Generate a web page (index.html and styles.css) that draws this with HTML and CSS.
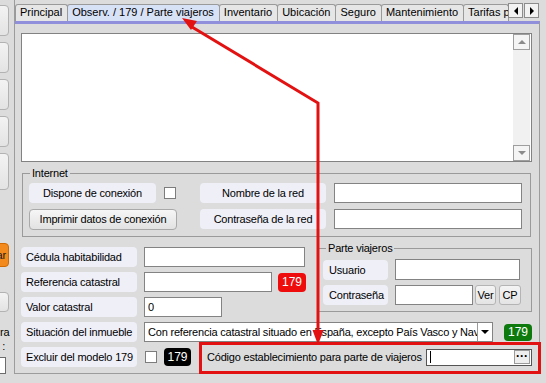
FILE: index.html
```html
<!DOCTYPE html>
<html lang="es">
<head>
<meta charset="utf-8">
<title>Observ. / 179 / Parte viajeros</title>
<link rel="stylesheet" href="styles.css">
</head>
<body>
<div class="app">
  <aside class="side">
    <div class="sbtn"></div>
    <div class="sbtn"></div>
    <div class="sbtn"></div>
    <div class="sbtn"></div>
    <div class="sbtn tall"></div>
    <div class="sbtn orange">ar</div>
    <div class="sbtn small"></div>
    <div class="stext">ra</div>
    <div class="stext colon">:</div>
    <div class="sinput"></div>
  </aside>
  <main class="main">
    <nav class="tabs">
      <span class="tab">Principal</span>
      <span class="tab active">Observ. / 179 / Parte viajeros</span>
      <span class="tab">Inventario</span>
      <span class="tab">Ubicación</span>
      <span class="tab">Seguro</span>
      <span class="tab">Mantenimiento</span>
      <span class="tab clipped">Tarifas por</span>
      <span class="tabarrow"><i class="tri-left"></i></span>
      <span class="tabarrow"><i class="tri-right"></i></span>
    </nav>
    <section class="panel">
      <div class="memo">
        <div class="memo-text"></div>
        <div class="vscroll">
          <span class="sb"><i class="tri-up"></i></span>
          <span class="track"></span>
          <span class="sb"><i class="tri-down"></i></span>
        </div>
      </div>
      <fieldset class="group internet">
        <legend>Internet</legend>
        <div class="irow">
          <div class="icell">
            <span class="lbl center w-disp">Dispone de conexión</span>
            <span class="chk chk-disp"></span>
          </div>
          <span class="lbl center w-red">Nombre de la red</span>
          <span class="inp w-redinp"></span>
        </div>
        <div class="irow">
          <div class="icell">
            <span class="btn w-print">Imprimir datos de conexión</span>
          </div>
          <span class="lbl center w-red">Contraseña de la red</span>
          <span class="inp w-redinp"></span>
        </div>
      </fieldset>
      <div class="lower">
        <div class="lower-top">
          <div class="lcol">
            <div class="frow">
              <span class="lbl lw">Cédula habitabilidad</span>
              <span class="inp fin w-ced"></span>
            </div>
            <div class="frow">
              <span class="lbl lw">Referencia catastral</span>
              <span class="inp fin w-ref"></span>
              <span class="badge red">179</span>
            </div>
            <div class="frow">
              <span class="lbl lw">Valor catastral</span>
              <span class="inp fin w-val">0</span>
            </div>
          </div>
          <fieldset class="group pv">
            <legend>Parte viajeros</legend>
            <div class="frow tall">
              <span class="lbl pw">Usuario</span>
              <span class="inp pin w-user"></span>
            </div>
            <div class="frow">
              <span class="lbl pw">Contraseña</span>
              <span class="inp pin w-pass"></span>
              <span class="sbutton ver">Ver</span>
              <span class="sbutton cp">CP</span>
            </div>
          </fieldset>
        </div>
        <div class="frow">
          <span class="lbl lw">Situación del inmueble</span>
          <span class="select fin">
            <span class="select-text">Con referencia catastral situado en España, excepto País Vasco y Navarra</span>
            <span class="select-btn"><i class="tri-down dark"></i></span>
          </span>
          <span class="badge green">179</span>
        </div>
        <div class="frow">
          <span class="lbl lw">Excluir del modelo 179</span>
          <span class="chk chk-excl"></span>
          <span class="badge black">179</span>
          <div class="codigo">
            <span class="codigo-text">Código establecimiento para parte de viajeros</span>
            <span class="inp codigo-inp"><span class="caret"></span><span class="dots">···</span></span>
          </div>
        </div>
      </div>
    </section>
  </main>
</div>
<svg class="annot" width="546" height="383" viewBox="0 0 546 383" xmlns="http://www.w3.org/2000/svg">
  <rect x="200.5" y="343.5" width="339" height="29" fill="none" stroke="#e31212" stroke-width="3"/>
  <polyline points="318,332 318,103 192,27" fill="none" stroke="#e31212" stroke-width="3" stroke-linejoin="miter"/>
  <polygon points="182,18 197,21 191,30" fill="#e31212"/>
  <polygon points="318,345 312.5,330 323.5,330" fill="#e31212"/>
</svg>
</body>
</html>
```
FILE: styles.css
```css
* { box-sizing: border-box; }

body {
  margin: 0;
  width: 546px;
  height: 383px;
  overflow: hidden;
  position: relative;
  background: #dcdcdc;
  font-family: "Liberation Sans", Arial, sans-serif;
  font-size: 11px;
  letter-spacing: -0.2px;
  color: #000;
}

.app { display: flex; height: 383px; }

/* left, clipped strip */
.side {
  width: 14px;
  flex: none;
  display: flex;
  flex-direction: column;
  align-items: flex-start;
  overflow: hidden;
  padding-top: 5px;
}
.sbtn {
  flex: none;
  width: 20px;
  height: 31px;
  margin-left: -11px;
  margin-bottom: 6px;
  border: 1px solid #b2b2b2;
  border-radius: 4px;
  background: linear-gradient(#f3f3f3, #e3e3e3);
}
.sbtn.tall { height: 37px; margin-bottom: 0; }
.sbtn.orange {
  margin-top: 53px;
  height: 24px;
  margin-bottom: 0;
  background: #f28a1e;
  border-color: #d26a00;
  text-align: right;
  padding-right: 2px;
  line-height: 22px;
  color: #1a1a1a;
}
.sbtn.small { margin-top: 25px; height: 20px; margin-bottom: 0; }
.stext { margin-top: 14px; width: 8px; text-align: right; line-height: 13px; }
.stext.colon { margin-top: 1px; width: 5px; }
.sinput {
  margin-top: 4px;
  width: 6px;
  height: 17px;
  background: #fff;
  border: 1px solid #6c6c6c;
  border-left: none;
}

/* main */
.main {
  width: 526px;
  flex: none;
  height: 374px;
  display: flex;
  flex-direction: column;
  border-left: 1px solid #9c9c9c;
}
.tabs {
  height: 21px;
  flex: none;
  display: flex;
  align-items: flex-end;
}
.tab {
  flex: none;
  height: 17px;
  padding: 0 5px 0 4px;
  margin-right: -1px;
  border: 1px solid #9a9a9a;
  border-bottom: none;
  border-radius: 3px 3px 0 0;
  background: #e6e6e6;
  line-height: 15px;
  letter-spacing: 0;
  white-space: nowrap;
}
.tab.active { background: #d8e2f7; }
.tab.clipped { flex: 1 1 0; min-width: 0; overflow: hidden; }
.tabarrow {
  flex: none;
  width: 15px;
  height: 15px;
  margin: 0 1px 3px 0;
  border: 1px solid #8c8c8c;
  background: #f2f2f2;
  display: flex;
  align-items: center;
  justify-content: center;
}
.tri-left { width: 0; height: 0; border-top: 4px solid transparent; border-bottom: 4px solid transparent; border-right: 4px solid #000; }
.tri-right { width: 0; height: 0; border-top: 4px solid transparent; border-bottom: 4px solid transparent; border-left: 4px solid #000; }
.tri-up { width: 0; height: 0; border-left: 4px solid transparent; border-right: 4px solid transparent; border-bottom: 4px solid #8a8a8a; }
.tri-down { width: 0; height: 0; border-left: 4px solid transparent; border-right: 4px solid transparent; border-top: 4px solid #8a8a8a; }
.tri-down.dark { border-top-color: #000; }

.panel {
  flex: 1;
  border-top: 3px solid #8f8fdc;
  border-right: 1px solid #9c9c9c;
  border-bottom: 1px solid #9c9c9c;
  padding: 9px 7px 0 6px;
}

/* memo */
.memo {
  height: 129px;
  display: flex;
  background: #fff;
  border: 1px solid #828282;
}
.memo-text { flex: 1; }
.vscroll {
  width: 17px;
  margin: 0 1px 0 0;
  display: flex;
  flex-direction: column;
  background: #f1f1f1;
}
.sb {
  height: 16px;
  flex: none;
  border: 1px solid #9e9e9e;
  background: #f4f4f4;
  display: flex;
  align-items: center;
  justify-content: center;
}
.track { flex: 1; }

/* groups */
.group {
  margin: 4px 1px 0;
  border: 1px solid #9a9a9a;
  min-width: 0;
}
.group legend {
  padding: 0 2px;
  line-height: 14px;
  font-size: 11px;
}
.internet { padding: 3px 8px 7px 6px; }
.internet legend { margin-left: 1px; }
.irow { display: flex; align-items: center; height: 20px; }
.irow + .irow { margin-top: 6px; }
.icell { width: 171px; flex: none; display: flex; align-items: center; }

.lbl {
  flex: none;
  height: 20px;
  line-height: 20px;
  background: #efeff8;
  border-radius: 4px;
  padding: 0 5px;
  white-space: nowrap;
}
.lbl.center { text-align: center; padding: 0; }
.w-disp { width: 127px; }
.w-red { width: 126px; }
.lw { width: 116px; }
.pw { width: 65px; padding-left: 6px; }

.chk {
  flex: none;
  width: 12px;
  height: 12px;
  background: #fff;
  border: 1px solid #7c7c7c;
}
.chk-disp { margin-left: 8px; }
.chk-excl { margin-left: 8px; }

.inp {
  flex: none;
  height: 20px;
  background: #fff;
  border: 1px solid #838383;
  line-height: 18px;
  padding-left: 3px;
}
.w-redinp { width: 188px; margin-left: 8px; }

.btn {
  flex: none;
  width: 148px;
  height: 21px;
  line-height: 19px;
  text-align: center;
  border: 1px solid #a9a9a9;
  border-radius: 4px;
  background: linear-gradient(#f6f6f6, #e2e2e2);
  white-space: nowrap;
}

/* lower part */
.lower {
  margin-top: 4px;
  display: flex;
  flex-direction: column;
  gap: 5px;
}
.lower-top { display: flex; align-items: flex-start; }
.lcol {
  width: 297px;
  flex: none;
  padding-top: 6px;
  display: flex;
  flex-direction: column;
  gap: 5px;
}
.frow { display: flex; align-items: center; height: 20px; }
.frow.tall { height: 21px; }
.fin { margin-left: 7px; }
.w-ced { width: 161px; }
.w-ref { width: 128px; }
.w-val { width: 78px; }

.badge {
  flex: none;
  color: #fff;
  border-radius: 4px;
  text-align: center;
  font-size: 12px;
  letter-spacing: 0;
}
.badge.red { background: #ee0c0c; width: 28px; height: 19px; line-height: 19px; margin-left: 6px; }
.badge.green { background: #0e7a0e; width: 28px; height: 17px; line-height: 17px; margin-left: 11px; }
.badge.black { background: #000; width: 27px; height: 18px; line-height: 18px; margin-left: 7px; }

.pv {
  margin: 0;
  width: 214px;
  flex: none;
  padding: 4px 4px 6px 4px;
}
.pv legend { margin-left: 3px; }
.pv .frow + .frow { margin-top: 5px; }
.pin { margin-left: 7px; }
.w-user { width: 125px; height: 21px; }
.w-pass { width: 78px; }
.sbutton {
  flex: none;
  height: 20px;
  line-height: 18px;
  text-align: center;
  border: 1px solid #b4b4b4;
  border-radius: 3px;
  background: linear-gradient(#f4f4f4, #e4e4e4);
}
.ver { width: 21px; margin-left: 2px; }
.cp { width: 22px; margin-left: 3px; }

.select {
  flex: none;
  width: 349px;
  height: 20px;
  display: flex;
  background: #fff;
  border: 1px solid #838383;
}
.select-text {
  flex: 1;
  min-width: 0;
  overflow: hidden;
  white-space: nowrap;
  line-height: 18px;
  padding-left: 3px;
}
.select-btn {
  width: 15px;
  flex: none;
  border-left: 1px solid #9a9a9a;
  display: flex;
  align-items: center;
  justify-content: center;
}

.codigo {
  flex: 1;
  min-width: 0;
  display: flex;
  align-items: center;
  margin-left: 16px;
}
.codigo-text { white-space: nowrap; }
.codigo-inp {
  margin-left: auto;
  width: 106px;
  height: 17px;
  display: flex;
  align-items: center;
  padding: 0 1px 0 3px;
  border-color: #555;
}
.caret { width: 1px; height: 12px; background: #000; }
.dots {
  margin-left: auto;
  width: 16px;
  height: 14px;
  border: 1px solid #9a9a9a;
  background: #eeeeee;
  text-align: center;
  font-weight: bold;
  line-height: 10px;
  font-size: 12px;
  letter-spacing: 0;
}

.annot {
  position: absolute;
  left: 0;
  top: 0;
  pointer-events: none;
}
```
